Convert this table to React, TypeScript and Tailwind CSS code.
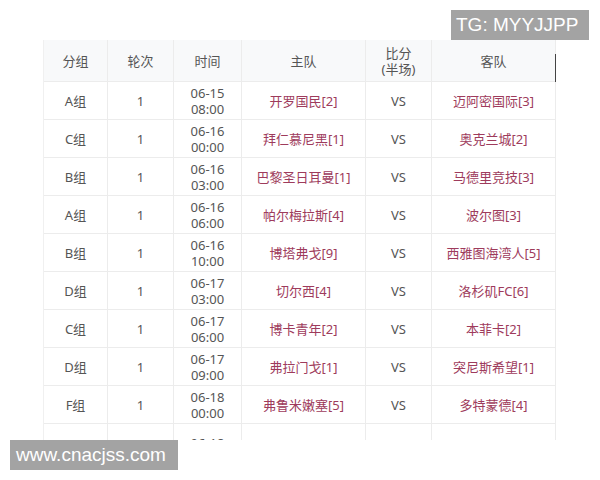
import React from 'react';

interface Match {
    group: string;
    round: string;
    date: string;
    time: string;
    home: string;
    away: string;
}

const matches: Match[] = [
    { group: 'A组', round: '1', date: '06-15', time: '08:00', home: '开罗国民[2]', away: '迈阿密国际[3]' },
    { group: 'C组', round: '1', date: '06-16', time: '00:00', home: '拜仁慕尼黑[1]', away: '奥克兰城[2]' },
    { group: 'B组', round: '1', date: '06-16', time: '03:00', home: '巴黎圣日耳曼[1]', away: '马德里竞技[3]' },
    { group: 'A组', round: '1', date: '06-16', time: '06:00', home: '帕尔梅拉斯[4]', away: '波尔图[3]' },
    { group: 'B组', round: '1', date: '06-16', time: '10:00', home: '博塔弗戈[9]', away: '西雅图海湾人[5]' },
    { group: 'D组', round: '1', date: '06-17', time: '03:00', home: '切尔西[4]', away: '洛杉矶FC[6]' },
    { group: 'C组', round: '1', date: '06-17', time: '06:00', home: '博卡青年[2]', away: '本菲卡[2]' },
    { group: 'D组', round: '1', date: '06-17', time: '09:00', home: '弗拉门戈[1]', away: '突尼斯希望[1]' },
    { group: 'F组', round: '1', date: '06-18', time: '00:00', home: '弗鲁米嫩塞[5]', away: '多特蒙德[4]' },
    { group: '', round: '', date: '06-18', time: '', home: '', away: '' },
];

const font = { fontFamily: '"Noto Sans", "Noto Sans CJK SC", sans-serif' };
const cols = 'grid grid-cols-[64px_66px_68px_124px_66px_124px]';
const cell = 'flex flex-col items-center justify-center border-r border-b border-[#ececec] text-center';

const App = () => {
    return (
        <div className="relative w-[600px] h-[480px] bg-white overflow-hidden" style={font}>
            {/* Table */}
            <div className="ml-[43px] mt-[40px] w-[513px] h-[400px] overflow-hidden border-l border-[#f0f0f0] text-[13px] leading-[16px] text-[#555]">
                <div className={`${cols} h-[42px] bg-[#f8f9fa]`}>
                    <div className={cell}>分组</div>
                    <div className={cell}>轮次</div>
                    <div className={cell}>时间</div>
                    <div className={cell}>主队</div>
                    <div className={cell}>
                        <span>比分</span>
                        <span>(半场)</span>
                    </div>
                    <div className={`${cell} relative`}>
                        客队
                        <div className="absolute right-[-1px] top-[14px] w-[1px] h-[28px] bg-[#444]"></div>
                    </div>
                </div>
                {matches.map((m, idx) => (
                    <div key={idx} className={`${cols} h-[38px]`}>
                        <div className={cell}>{m.group}</div>
                        <div className={cell}>{m.round}</div>
                        <div className={cell}>
                            <span>{m.date}</span>
                            <span>{m.time}</span>
                        </div>
                        <div className={`${cell} text-[#9e3b5c]`}>{m.home}</div>
                        <div className={cell}>{m.home ? 'VS' : ''}</div>
                        <div className={`${cell} text-[#9e3b5c]`}>{m.away}</div>
                    </div>
                ))}
            </div>

            {/* Watermarks */}
            <div className="absolute left-[451px] top-[10px] w-[138px] h-[30px] bg-[#a3a3a3] flex items-center pl-[5px] text-white text-[19px]" style={{ fontFamily: '"Liberation Sans", sans-serif' }}>
                TG: MYYJJPP
            </div>
            <div className="absolute left-[10px] top-[440px] w-[168px] h-[30px] bg-[#a3a3a3] flex items-center pl-[6px] text-white text-[19px]" style={{ fontFamily: '"Liberation Sans", sans-serif' }}>
                www.cnacjss.com
            </div>
        </div>
    );
};

export default App;
